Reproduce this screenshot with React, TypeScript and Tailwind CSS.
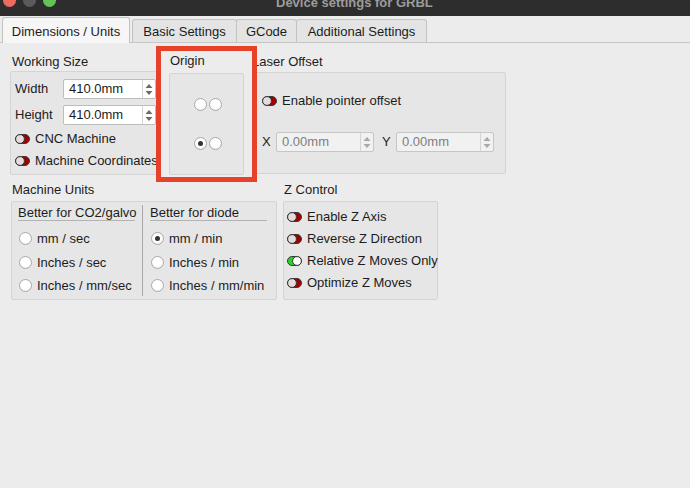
import React from "react";

function Toggle({ on }: { on?: boolean }) {
  return (
    <svg width="15" height="10" viewBox="0 0 15 10" className="shrink-0">
      {on ? (
        <>
          <rect x="0.5" y="0.5" width="14" height="9" rx="4.5" fill="#27d427" stroke="#3a3a3a" />
          <circle cx="10" cy="5" r="4.4" fill="#ffffff" stroke="#3a3a3a" />
        </>
      ) : (
        <>
          <rect x="0.5" y="0.5" width="14" height="9" rx="4.5" fill="#a10000" stroke="#3a3a3a" />
          <circle cx="5" cy="5" r="4.4" fill="#e4dcdc" stroke="#3a3a3a" />
        </>
      )}
    </svg>
  );
}

function Radio({ checked }: { checked?: boolean }) {
  return (
    <span className="w-[13px] h-[13px] shrink-0 rounded-full border border-[#a8a8a8] bg-white flex items-center justify-center shadow-[inset_0_-1px_1px_rgba(0,0,0,0.06)]">
      {checked && <span className="w-[5px] h-[5px] rounded-full bg-[#333333]" />}
    </span>
  );
}

function Spinner({ disabled }: { disabled?: boolean }) {
  const c = disabled ? "#a8a8a8" : "#6a6a6a";
  return (
    <div className="w-[13px] border-l border-[#d4d4d4] flex items-center justify-center">
      <svg width="8" height="13" viewBox="0 0 8 13">
        <path d="M4 1 L7.5 5 L0.5 5 Z" fill={c} />
        <path d="M4 12 L7.5 8 L0.5 8 Z" fill={c} />
      </svg>
    </div>
  );
}

function SpinBox({ value, wide, disabled }: { value: string; wide?: boolean; disabled?: boolean }) {
  return (
    <div
      className={
        (wide ? "w-[98px] " : "w-[93px] ") +
        (disabled ? "bg-[#f1f1f1] border-[#c6c6c6] " : "bg-white border-[#bdbdbd] ") +
        "h-[20px] flex border rounded-[2px]"
      }
    >
      <div className={(disabled ? "text-[#7d7d7d] " : "text-[#1a1a1a] ") + "flex-1 pl-[5px] flex items-center text-[13px]"}>
        {value}
      </div>
      <Spinner disabled={disabled} />
    </div>
  );
}

function ToggleRow({ label, on, h }: { label: string; on?: boolean; h: string }) {
  return (
    <div className={h + " flex items-center gap-[5px] whitespace-nowrap"}>
      <Toggle on={on} />
      <span>{label}</span>
    </div>
  );
}

function RadioRow({ label, checked }: { label: string; checked?: boolean }) {
  return (
    <div className="h-[23.5px] flex items-center gap-[5px] pl-[1px] whitespace-nowrap">
      <Radio checked={checked} />
      <span>{label}</span>
    </div>
  );
}

export default function App() {
  return (
    <div className="w-[690px] h-[488px] overflow-hidden bg-[#ececec] text-[13px] text-[#1c1c1c] font-['Liberation_Sans',Arial,sans-serif]">
      {/* Title bar */}
      <div className="h-[16px] bg-[#2d2d2d] overflow-hidden flex items-start">
        <div className="flex gap-[7px] pl-[3px] -mt-[6px]">
          <span className="w-[13px] h-[13px] rounded-full bg-[#ee6a5f]" />
          <span className="w-[13px] h-[13px] rounded-full bg-[#5a5a5a]" />
          <span className="w-[13px] h-[13px] rounded-full bg-[#61c454]" />
        </div>
        <div className="ml-[220px] h-[20px] -mt-[8px] flex items-center font-bold text-[#9c9c9c] leading-[13px] whitespace-nowrap">
          Device settings for GRBL
        </div>
      </div>

      {/* Tabs */}
      <div className="h-[27px] flex items-end pl-[2px] border-b border-[#c6c6c6]">
        <div className="w-[128px] h-[26px] -mb-px pt-[3px] bg-[#f6f6f6] border border-b-0 border-[#c3c3c3] rounded-t-[3px] flex items-center justify-center">
          Dimensions / Units
        </div>
        <div className="ml-[2px] w-[105px] h-[23px] pt-[2px] bg-[#e4e4e4] border border-b-0 border-[#c3c3c3] rounded-t-[3px] flex items-center justify-center">
          Basic Settings
        </div>
        <div className="-ml-px w-[61px] h-[23px] pt-[2px] bg-[#e4e4e4] border border-b-0 border-[#c3c3c3] rounded-t-[3px] flex items-center justify-center">
          GCode
        </div>
        <div className="-ml-px w-[131px] h-[23px] pt-[2px] bg-[#e4e4e4] border border-b-0 border-[#c3c3c3] rounded-t-[3px] flex items-center justify-center">
          Additional Settings
        </div>
      </div>

      {/* Content */}
      <div className="pl-[10px] pt-[3px]">
        {/* Row 1 */}
        <div className="flex items-start">
          {/* Working Size */}
          <div className="flex flex-col pt-[8px]">
            <div className="h-[16px] leading-[16px] pl-[2px]">Working Size</div>
            <div className="mt-[1px] w-[153px] h-[104px] bg-[#e6e6e6] border border-[#d4d4d4] rounded-[2px] pl-[4px] pt-[7px] flex flex-col">
              <div className="flex items-center h-[20px]">
                <span className="w-[48px]">Width</span>
                <SpinBox value="410.0mm" />
              </div>
              <div className="flex items-center h-[20px] mt-[6px]">
                <span className="w-[48px]">Height</span>
                <SpinBox value="410.0mm" />
              </div>
              <div className="mt-[6px]">
                <ToggleRow h="h-[16px]" label="CNC Machine" />
              </div>
              <div className="mt-[6px]">
                <ToggleRow h="h-[16px]" label="Machine Coordinates" />
              </div>
            </div>
          </div>

          {/* Origin (highlighted) */}
          <div className="relative z-10 -ml-[7px] w-[101px] h-[136px] border-[5px] border-[#e8412a] bg-[#ececec] pl-[8px] pt-[2px] flex flex-col">
            <div className="h-[16px] leading-[16px] pl-[1px]">Origin</div>
            <div className="mt-[4px] w-[75px] h-[102px] bg-[#e6e6e6] border border-[#d4d4d4] rounded-[2px] flex flex-col items-center justify-center gap-[26px] pl-[2px]">
              <div className="flex gap-[2px]">
                <Radio />
                <Radio />
              </div>
              <div className="flex gap-[2px]">
                <Radio checked />
                <Radio />
              </div>
            </div>
          </div>

          {/* Laser Offset */}
          <div className="-ml-[6px] flex flex-col pt-[8px]">
            <div className="h-[16px] leading-[16px] pl-[1px]">Laser Offset</div>
            <div className="mt-[2px] w-[255px] h-[102px] bg-[#e6e6e6] border border-[#d4d4d4] rounded-[2px] pl-[10px] pt-[20px] flex flex-col">
              <ToggleRow h="h-[16px]" label="Enable pointer offset" />
              <div className="mt-[23px] flex items-center h-[20px]">
                <span className="w-[14px]">X</span>
                <SpinBox value="0.00mm" wide disabled />
                <span className="ml-[8px] w-[14px]">Y</span>
                <SpinBox value="0.00mm" wide disabled />
              </div>
            </div>
          </div>
        </div>

        {/* Row 2 */}
        <div className="flex items-start">
          {/* Machine Units */}
          <div className="ml-[1px] flex flex-col">
            <div className="h-[15px] leading-[15px] pl-[1px]">Machine Units</div>
            <div className="mt-[4px] w-[266px] h-[99px] bg-[#e6e6e6] border border-[#d4d4d4] rounded-[2px] pl-[6px] pt-[3px] pb-[3px] flex">
              <div className="w-[117px] flex flex-col">
                <div className="h-[17px] leading-[15px] border-b border-[#b3b3b3] whitespace-nowrap">Better for CO2/galvo</div>
                <div className="mt-[6px] flex flex-col">
                  <RadioRow label="mm / sec" />
                  <RadioRow label="Inches / sec" />
                  <RadioRow label="Inches / mm/sec" />
                </div>
              </div>
              <div className="ml-[7px] w-px bg-[#a9a9a9] self-stretch" />
              <div className="ml-[7px] w-[117px] flex flex-col">
                <div className="h-[17px] leading-[15px] border-b border-[#b3b3b3] whitespace-nowrap">Better for diode</div>
                <div className="mt-[6px] flex flex-col">
                  <RadioRow label="mm / min" checked />
                  <RadioRow label="Inches / min" />
                  <RadioRow label="Inches / mm/min" />
                </div>
              </div>
            </div>
          </div>

          {/* Z Control */}
          <div className="ml-[6px] flex flex-col">
            <div className="h-[15px] leading-[15px] pl-[1px]">Z Control</div>
            <div className="mt-[4px] w-[155px] h-[99px] bg-[#e6e6e6] border border-[#d4d4d4] rounded-[2px] pl-[3px] pt-[4px] flex flex-col">
              <ToggleRow h="h-[22px]" label="Enable Z Axis" />
              <ToggleRow h="h-[22px]" label="Reverse Z Direction" />
              <ToggleRow h="h-[22px]" label="Relative Z Moves Only" on />
              <ToggleRow h="h-[22px]" label="Optimize Z Moves" />
            </div>
          </div>
        </div>
      </div>
    </div>
  );
}
